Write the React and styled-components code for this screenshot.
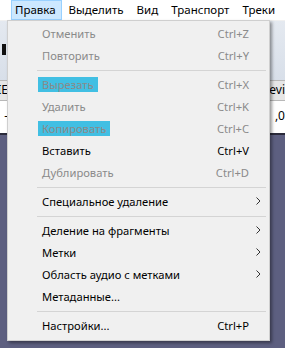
import styled, { createGlobalStyle } from "styled-components";

const GlobalStyle = createGlobalStyle`
  html, body {
    margin: 0;
    padding: 0;
  }
  body {
    font-family: "Noto Sans", "Liberation Sans", sans-serif;
    font-size: 11.2px;
  }
`;

const editItems = [
  { label: "Отменить", shortcut: "Ctrl+Z", disabled: true },
  { label: "Повторить", shortcut: "Ctrl+Y", disabled: true },
  { sep: true },
  { label: "Вырезать", shortcut: "Ctrl+X", disabled: true, marked: true },
  { label: "Удалить", shortcut: "Ctrl+K", disabled: true },
  { label: "Копировать", shortcut: "Ctrl+C", disabled: true, marked: true },
  { label: "Вставить", shortcut: "Ctrl+V" },
  { label: "Дублировать", shortcut: "Ctrl+D", disabled: true },
  { sep: true },
  { label: "Специальное удаление", sub: true },
  { sep: true },
  { label: "Деление на фрагменты", sub: true },
  { label: "Метки", sub: true },
  { label: "Область аудио с метками", sub: true },
  { label: "Метаданные..." },
  { sep: true },
  { label: "Настройки...", shortcut: "Ctrl+P" },
];

const topMenus = ["Правка", "Выделить", "Вид", "Транспорт", "Треки"];

const App = () => {
  return (
    <Screen>
      <GlobalStyle />
      <MenuBar>
        {topMenus.map((m, i) => (
          <TopItem key={m} $open={i === 0}>
            {m}
          </TopItem>
        ))}
      </MenuBar>
      <Workspace>
        <Dock>
          <ToolArea>
            <PauseIcon />
          </ToolArea>
          <DeviceRow>IE</DeviceRow>
          <ValueRow>-</ValueRow>
        </Dock>
        <Dock $right>
          <ToolArea />
          <DeviceRow>evi</DeviceRow>
          <ValueRow>,0</ValueRow>
        </Dock>
      </Workspace>

      <Dropdown>
        {editItems.map((it, i) =>
          it.sep ? (
            <Separator key={i} />
          ) : (
            <Item key={i} $disabled={it.disabled}>
              <Label $marked={it.marked}>{it.label}</Label>
              <Shortcut>{it.shortcut}</Shortcut>
              <Arrow>{it.sub ? <ChevronIcon /> : null}</Arrow>
            </Item>
          )
        )}
      </Dropdown>
    </Screen>
  );
};

const ChevronIcon = () => (
  <svg width="5" height="8" viewBox="0 0 5 8">
    <path d="M0.5 0.5 L4 4 L0.5 7.5" fill="none" stroke="#333" strokeWidth="1" />
  </svg>
);

const Screen = styled.div`
  position: relative;
  width: 285px;
  height: 348px;
  overflow: hidden;
  background: #5d5f80;
`;

const MenuBar = styled.div`
  display: flex;
  align-items: stretch;
  height: 20px;
  padding-left: 11px;
  background: #ffffff;
  border-bottom: 1px solid #f0f0f0;
`;

const TopItem = styled.div`
  display: flex;
  align-items: center;
  padding: 0 5px 1px 3px;
  margin-right: 3px;
  font-size: 11.5px;
  color: #000;
  white-space: nowrap;
  border: 1px solid ${(p) => (p.$open ? "#99d1ff" : "transparent")};
  background: ${(p) => (p.$open ? "#cce8ff" : "transparent")};
`;

const Workspace = styled.div`
  display: flex;
  justify-content: space-between;
`;

const Dock = styled.div`
  display: flex;
  flex-direction: column;
  width: ${(p) => (p.$right ? "16px" : "8px")};
  overflow: hidden;
  align-items: ${(p) => (p.$right ? "flex-end" : "flex-start")};
  border-bottom: 2px solid #2a2a3a;
`;

const ToolArea = styled.div`
  width: 100%;
  height: 59px;
  background: linear-gradient(#e4e9f0, #d8dfe9);
  display: flex;
  align-items: flex-start;
  padding-top: 23px;
  box-sizing: border-box;
`;

const PauseIcon = styled.div`
  width: 4px;
  height: 11px;
  margin-left: 2px;
  background: #111;
`;

const DeviceRow = styled.div`
  width: 100%;
  height: 19px;
  background: #e6e6e6;
  border-top: 1px solid #b8b8b8;
  border-bottom: 1px solid #b8b8b8;
  font-size: 12px;
  line-height: 18px;
  color: #000;
  white-space: nowrap;
  display: flex;
  justify-content: flex-end;
`;

const ValueRow = styled.div`
  width: 100%;
  height: 32px;
  background: #ffffff;
  font-size: 12px;
  line-height: 30px;
  color: #000;
  display: flex;
  justify-content: flex-end;
  white-space: nowrap;
`;

const Dropdown = styled.div`
  position: absolute;
  left: 7px;
  top: 20px;
  width: 263px;
  box-sizing: border-box;
  padding: 2px 1px 3px;
  background: #f0f0f0;
  border: 1px solid #cfcfcf;
  box-shadow: 2px 2px 3px rgba(0, 0, 0, 0.4);
`;

const Item = styled.div`
  display: grid;
  grid-template-columns: 1fr auto 19px;
  align-items: center;
  box-sizing: border-box;
  height: 22px;
  padding: 0 0 2px 33px;
  color: ${(p) => (p.$disabled ? "#8a8a8a" : "#000")};
  white-space: nowrap;
`;

const Label = styled.span`
  justify-self: start;
  margin-left: -4px;
  padding: 0 4px;
  line-height: 15px;
  background: ${(p) => (p.$marked ? "#41bfe3" : "transparent")};
`;

const Shortcut = styled.span`
  text-align: right;
`;

const Arrow = styled.span`
  display: flex;
  align-items: center;
  justify-content: center;
`;

const Separator = styled.div`
  height: 1px;
  margin: 3px 2px 3px 28px;
  background: #d4d4d4;
`;

export default App;
